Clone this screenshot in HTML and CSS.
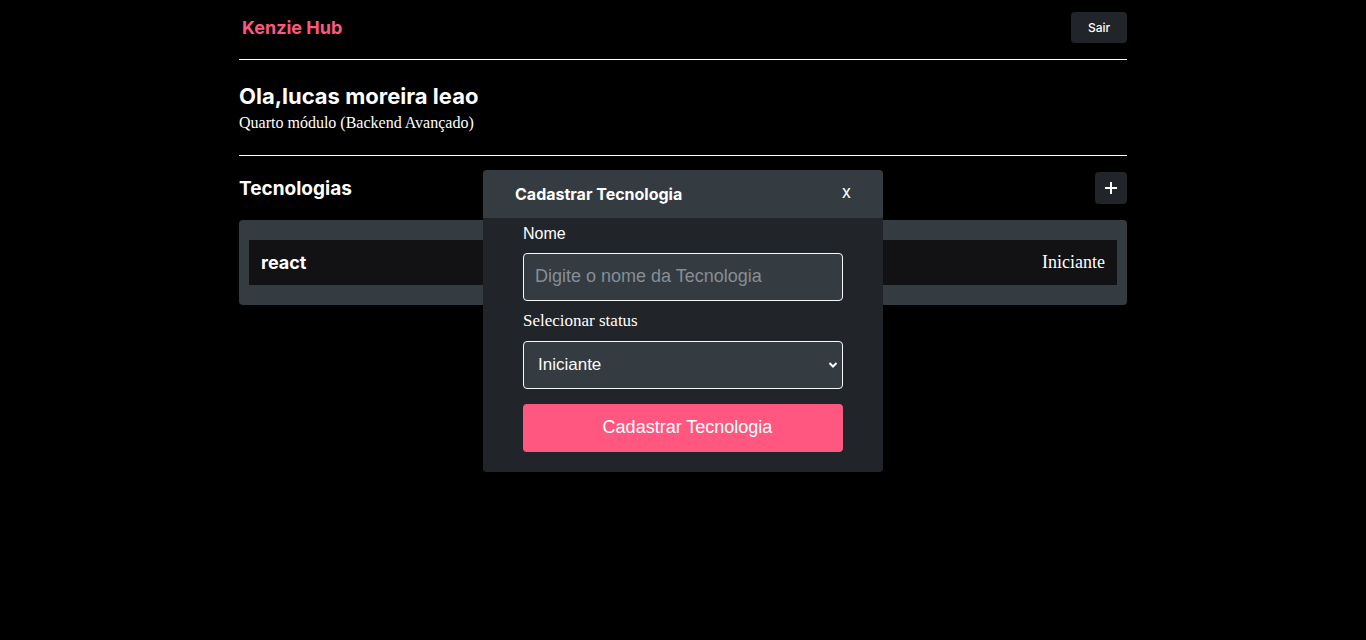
FILE: index.html
```html
<!DOCTYPE html>
<html lang="pt-BR">
<head>
<meta charset="utf-8">
<title>Kenzie Hub</title>
<link rel="stylesheet" href="styles.css">
</head>
<body>
<div class="page">
  <header class="topbar">
    <h1 class="logo">Kenzie Hub</h1>
    <button class="btn-dark btn-sair">Sair</button>
  </header>
  <section class="profile">
    <h2 class="greeting">Ola,lucas moreira leao</h2>
    <p class="module">Quarto módulo (Backend Avançado)</p>
  </section>
  <section class="techs">
    <div class="techs-head">
      <h3 class="techs-title">Tecnologias</h3>
      <button class="btn-dark btn-add" aria-label="Adicionar">
        <svg width="14" height="14" viewBox="0 0 14 14"><path d="M7 1v12M1 7h12" stroke="#fff" stroke-width="2"/></svg>
      </button>
    </div>
    <ul class="tech-list">
      <li class="tech-item"><span class="tech-name">react</span><span class="tech-status">Iniciante</span></li>
    </ul>
  </section>
</div>

<div class="modal">
  <div class="modal-head">
    <h4 class="modal-title">Cadastrar Tecnologia</h4>
    <button class="modal-close">x</button>
  </div>
  <form class="modal-body">
    <label class="label-nome" for="nome">Nome</label>
    <input class="field" id="nome" type="text" placeholder="Digite o nome da Tecnologia">
    <label class="label-status" for="status">Selecionar status</label>
    <div class="select-wrap">
      <select class="field select" id="status">
        <option>Iniciante</option>
        <option>Intermediário</option>
        <option>Avançado</option>
      </select>
      <svg class="chevron" width="10" height="8" viewBox="0 0 10 8"><path d="M1.5 2l3.5 3.5L8.5 2" fill="none" stroke="#fff" stroke-width="2"/></svg>
    </div>
    <button class="btn-submit" type="button">Cadastrar Tecnologia</button>
  </form>
</div>
</body>
</html>
```
FILE: styles.css
```css
* { box-sizing: border-box; }
html, body { margin: 0; padding: 0; background: #000; }
body { color: #fff; font-family: "Liberation Serif", serif; min-height: 640px; }

.page { width: 888px; margin: 0 auto; }

.topbar {
  height: 60px;
  display: flex;
  align-items: center;
  justify-content: space-between;
  border-bottom: 1px solid #fff;
  padding-bottom: 4px;
  padding-left: 3px;
}
.logo {
  margin: 0;
  font-family: Inter, sans-serif;
  font-weight: 700;
  font-size: 18px;
  color: #FF577F;
}
.btn-dark {
  background: #212529;
  border: none;
  border-radius: 4px;
  color: #fff;
  cursor: pointer;
  padding: 0;
}
.btn-sair {
  width: 56px;
  height: 31px;
  font-family: Inter, sans-serif;
  font-size: 12px;
  font-weight: 500;
}

.profile {
  padding: 23px 0 23px;
  border-bottom: 1px solid #fff;
}
.greeting {
  margin: 0;
  font-family: Inter, sans-serif;
  font-weight: 700;
  font-size: 22px;
  line-height: 27px;
}
.module {
  margin: 3px 0 0;
  font-size: 16px;
  line-height: 19px;
}

.techs { padding-top: 16px; }
.techs-head {
  display: flex;
  align-items: center;
  justify-content: space-between;
  height: 32px;
  margin-bottom: 16px;
}
.techs-title {
  margin: 0;
  font-family: Inter, sans-serif;
  font-weight: 700;
  font-size: 19px;
}
.btn-add {
  width: 32px;
  height: 32px;
  display: flex;
  align-items: center;
  justify-content: center;
}
.tech-list {
  list-style: none;
  margin: 0;
  padding: 20px 10px;
  background: #343B41;
  border-radius: 4px;
}
.tech-item {
  height: 45px;
  background: #121214;
  display: flex;
  align-items: center;
  justify-content: space-between;
  padding: 0 12px;
}
.tech-name {
  font-family: Inter, sans-serif;
  font-weight: 700;
  font-size: 18px;
}
.tech-status { font-size: 18px; }

.modal {
  position: absolute;
  top: 170px;
  left: 50%;
  width: 400px;
  margin-left: -200px;
  border-radius: 4px;
  overflow: hidden;
  background: #212529;
}
.modal-head {
  height: 48px;
  background: #343B41;
  display: flex;
  align-items: center;
  justify-content: space-between;
  padding: 0 32px 0 32px;
}
.modal-title {
  margin: 0;
  font-family: Inter, sans-serif;
  font-weight: 700;
  font-size: 16px;
}
.modal-close {
  background: none;
  border: none;
  color: #fff;
  font-family: Inter, sans-serif;
  font-size: 17px;
  padding: 0;
  margin-bottom: 4px;
}
.modal-body {
  display: flex;
  flex-direction: column;
  padding: 7px 40px 20px;
  margin: 0;
}
.label-nome {
  font-family: "Liberation Sans", Arial, sans-serif;
  font-size: 16px;
  line-height: 18px;
  margin-bottom: 10px;
}
.field {
  width: 320px;
  height: 48px;
  background: #343B41;
  border: 1px solid #F8F9FA;
  border-radius: 4px;
  color: #F8F9FA;
  font-family: "Liberation Sans", Arial, sans-serif;
  font-size: 18px;
  padding: 0 11px 1px;
  outline: none;
}
.field::placeholder { color: #868E96; }
.label-status {
  font-size: 17px;
  line-height: 18px;
  margin: 11px 0 11px;
}
.select-wrap { position: relative; }
.select {
  appearance: none;
  -webkit-appearance: none;
  padding-left: 14px;
  font-size: 17px;
}
.chevron {
  position: absolute;
  right: 5px;
  top: 20px;
  pointer-events: none;
}
.btn-submit {
  margin-top: 15px;
  height: 48px;
  border: none;
  border-radius: 4px;
  background: #FF577F;
  color: #fff;
  font-family: "Liberation Sans", Arial, sans-serif;
  font-size: 18px;
  padding: 0 0 2px 9px;
}
```
